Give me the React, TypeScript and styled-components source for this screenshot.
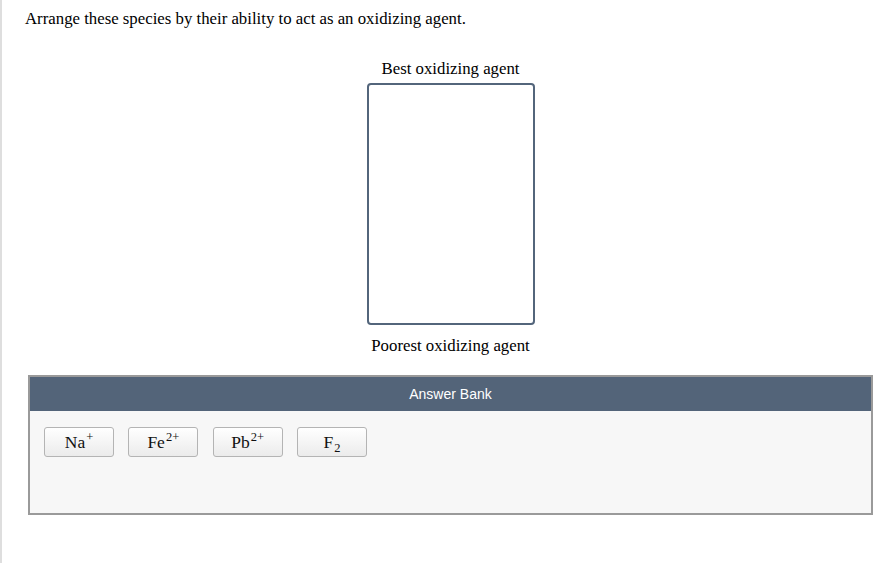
import React from "react";
import styled, { createGlobalStyle } from "styled-components";

const GlobalStyle = createGlobalStyle`
  html, body {
    margin: 0;
    padding: 0;
    background: #ffffff;
  }
  body {
    font-family: "Liberation Serif", "Times New Roman", serif;
    color: #000;
  }
`;

const Page = styled.div`
  box-sizing: border-box;
  min-height: 563px;
  border-left: 2px solid #dedede;
  padding: 10px 22px 0 23px;
`;

const Prompt = styled.p`
  margin: 0;
  font-size: 16.8px;
  line-height: 18px;
`;

const Workspace = styled.div`
  margin-left: 3px;
  display: flex;
  flex-direction: column;
  align-items: center;
`;

const RankLabel = styled.div<{ $gapTop: number; $gapBottom: number }>`
  font-size: 16.8px;
  line-height: 18px;
  margin-top: ${(p) => p.$gapTop}px;
  margin-bottom: ${(p) => p.$gapBottom}px;
`;

const DropZone = styled.div`
  box-sizing: border-box;
  width: 168px;
  height: 242px;
  border: 2px solid #53657b;
  border-radius: 4px;
  background: #fff;
`;

const Bank = styled.section`
  box-sizing: border-box;
  width: 100%;
  margin-top: 20px;
  border: 2px solid #9a9a9a;
  background: #f7f7f7;
`;

const BankHeader = styled.div`
  height: 34px;
  background: #536479;
  color: #ffffff;
  font-family: "Liberation Sans", Arial, sans-serif;
  font-size: 14px;
  display: flex;
  align-items: center;
  justify-content: center;
`;

const BankBody = styled.div`
  min-height: 102px;
  box-sizing: border-box;
  padding: 16px 14px;
  display: flex;
  align-items: flex-start;
  gap: 14.3px;
`;

const Tile = styled.div`
  box-sizing: border-box;
  width: 70px;
  height: 30px;
  border: 1px solid #b4b4b4;
  border-radius: 3px;
  background: linear-gradient(#ffffff, #ebebeb);
  display: flex;
  align-items: center;
  justify-content: center;
  font-family: "Liberation Serif", "Times New Roman", serif;
  font-size: 17.5px;
  color: #111;
`;

const Sup = styled.sup`
  font-size: 12.5px;
  line-height: 0;
  vertical-align: 0;
  position: relative;
  top: -7px;
  margin-left: 1px;
`;

const Sub = styled.sub`
  font-size: 12.5px;
  line-height: 0;
  vertical-align: 0;
  position: relative;
  top: 4px;
  margin-left: 1px;
`;

type Species = { base: string; sup?: string; sub?: string };

const species: Species[] = [
  { base: "Na", sup: "+" },
  { base: "Fe", sup: "2+" },
  { base: "Pb", sup: "2+" },
  { base: "F", sub: "2" },
];

export default function App() {
  return (
    <>
      <GlobalStyle />
      <Page>
        <Prompt>Arrange these species by their ability to act as an oxidizing agent.</Prompt>
        <Workspace>
          <RankLabel $gapTop={32} $gapBottom={5}>Best oxidizing agent</RankLabel>
          <DropZone />
          <RankLabel $gapTop={12} $gapBottom={0}>Poorest oxidizing agent</RankLabel>
          <Bank>
            <BankHeader>Answer Bank</BankHeader>
            <BankBody>
              {species.map((s) => (
                <Tile key={s.base}>
                  <span>
                    {s.base}
                    {s.sup && <Sup>{s.sup}</Sup>}
                    {s.sub && <Sub>{s.sub}</Sub>}
                  </span>
                </Tile>
              ))}
            </BankBody>
          </Bank>
        </Workspace>
      </Page>
    </>
  );
}
